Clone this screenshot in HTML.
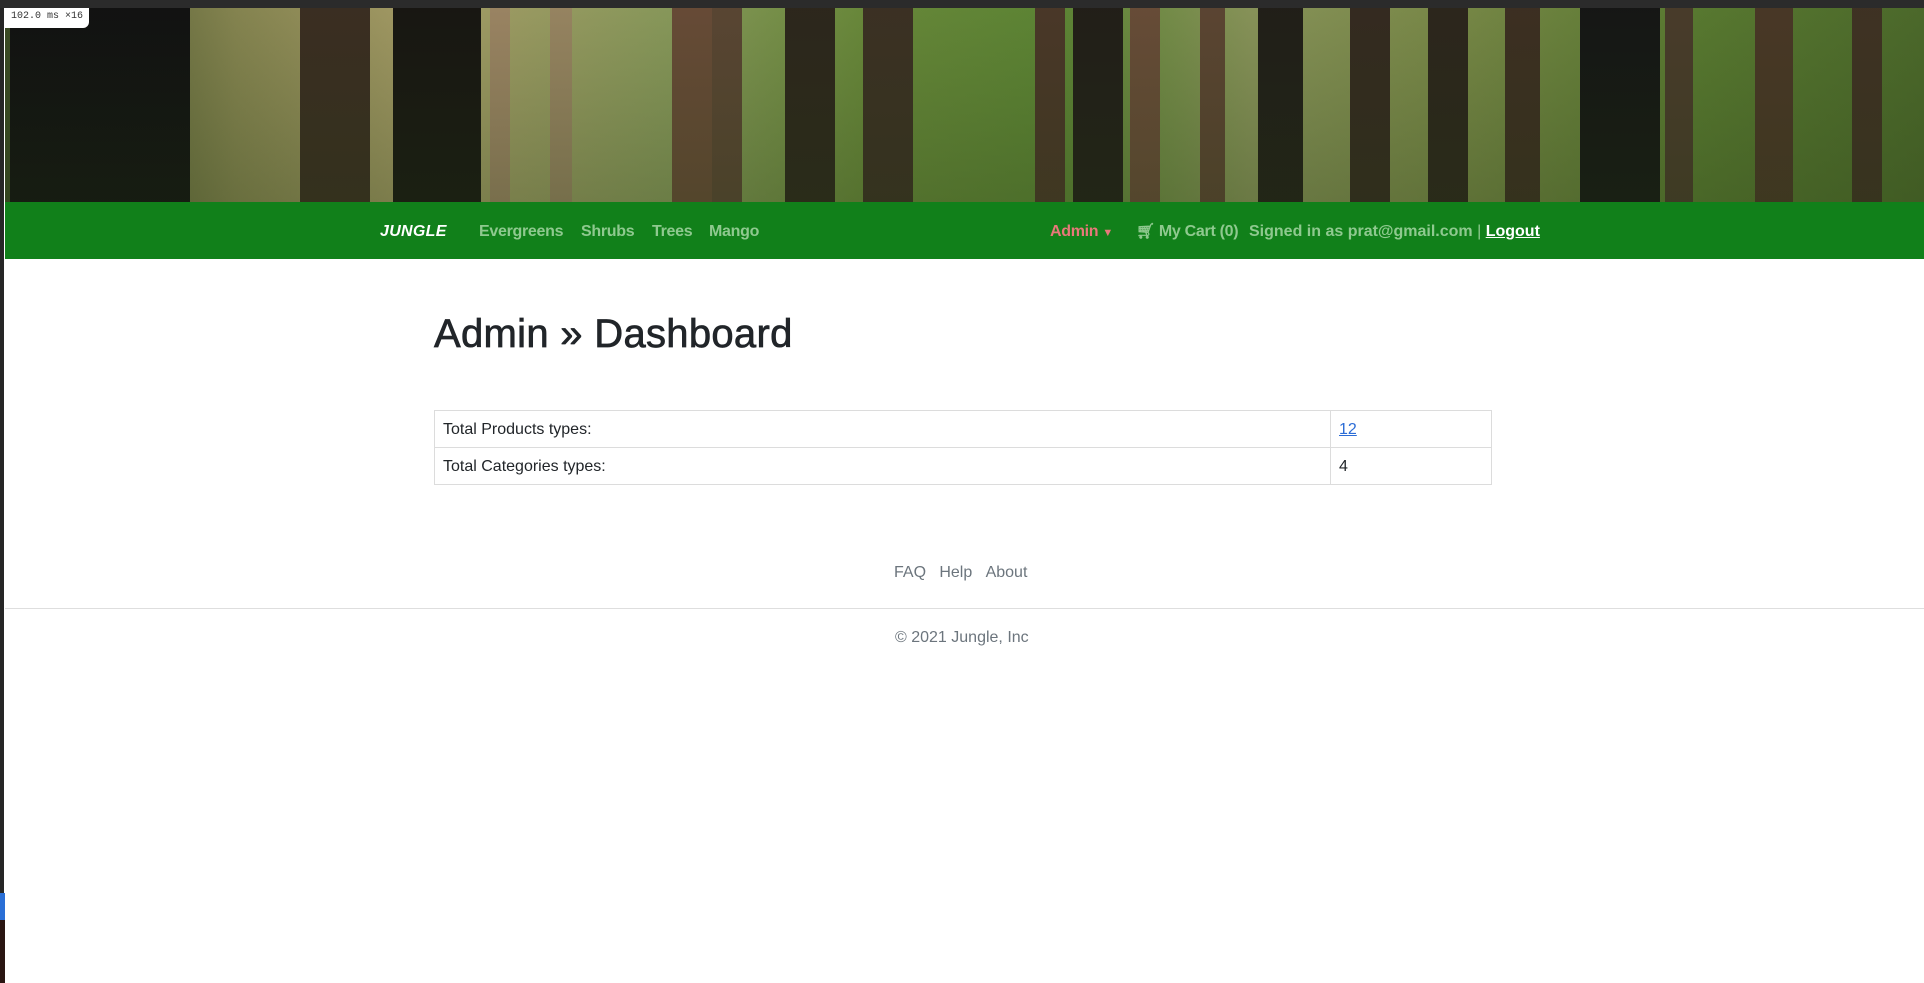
<!DOCTYPE html>
<html><head><meta charset="utf-8"><style>
*{margin:0;padding:0;box-sizing:border-box}
body{width:1924px;height:983px;background:#fff;font-family:"Liberation Sans",sans-serif;position:relative;overflow:hidden}
.topbar{position:absolute;left:0;top:0;width:1924px;height:8px;background:#2b2b2b}
.leftbar{position:absolute;left:0;top:8px;width:4px;height:975px;background:#262626}
.banner{position:absolute;left:5px;top:8px;width:1919px;height:194px;overflow:hidden;
background:linear-gradient(90deg,#3a4a25 0%,#8c8a55 12%,#b0a46e 22%,#8ea060 35%,#6c8e3c 45%,#5f8a36 55%,#8f9a5f 65%,#7f8f4c 75%,#5b7e32 88%,#4d6c2c 100%)}
.banner::after{content:"";position:absolute;inset:0;background:linear-gradient(180deg,rgba(60,70,30,.1),rgba(40,60,20,.35))}
.t{position:absolute;top:0;height:194px}
.nav{position:absolute;left:5px;top:202px;width:1919px;height:57px;background:#11801a}
.nav>span{position:absolute;top:21px;font-size:16px;line-height:18px;font-weight:bold;color:#8fc98f;white-space:nowrap;letter-spacing:-0.3px}
h1{position:absolute;left:434px;top:312px;font-size:40px;font-weight:normal;color:#212529;-webkit-text-stroke:0.7px #212529;letter-spacing:0.3px}
table{position:absolute;left:434px;top:410px;width:1058px;border-collapse:collapse;font-size:16px;color:#212529}
td{border:1px solid #dcdcdc;height:37px;padding:2px 8px 0}
.f{position:absolute;font-size:16px;color:#6c757d}
</style></head><body>
<div class="topbar"></div>
<div class="leftbar"></div>
<div style="position:absolute;left:5px;top:8px;width:84px;height:20px;background:#fff;border-radius:0 0 6px 0;font:10px 'Liberation Mono',monospace;color:#333;padding:3px 6px;z-index:3">102.0 ms ×16</div>
<div class="banner">
<div class="t" style="left:5px;width:180px;background:#0d0c10"></div>
<div class="t" style="left:295px;width:70px;background:#3a2b22"></div>
<div class="t" style="left:388px;width:88px;background:#141111"></div>
<div class="t" style="left:485px;width:20px;background:#a48a6a"></div>
<div class="t" style="left:545px;width:22px;background:#a08a68"></div>
<div class="t" style="left:667px;width:45px;background:#6b4b39"></div>
<div class="t" style="left:707px;width:30px;background:#5c4535"></div>
<div class="t" style="left:780px;width:50px;background:#2b231c"></div>
<div class="t" style="left:858px;width:50px;background:#3b2e24"></div>
<div class="t" style="left:1030px;width:30px;background:#4b3529"></div>
<div class="t" style="left:1068px;width:50px;background:#1f1a18"></div>
<div class="t" style="left:1125px;width:30px;background:#6b4c3a"></div>
<div class="t" style="left:1195px;width:25px;background:#5e4434"></div>
<div class="t" style="left:1253px;width:45px;background:#1e1a18"></div>
<div class="t" style="left:1345px;width:40px;background:#332720"></div>
<div class="t" style="left:1423px;width:40px;background:#2a221c"></div>
<div class="t" style="left:1500px;width:35px;background:#3c2c22"></div>
<div class="t" style="left:1575px;width:80px;background:#111114"></div>
<div class="t" style="left:1660px;width:28px;background:#4a3a2c"></div>
<div class="t" style="left:1750px;width:38px;background:#4a3527"></div>
<div class="t" style="left:1847px;width:30px;background:#3f2f24"></div>
</div>
<div class="nav">
<span style="left:375px;color:#fff;font-style:italic;font-weight:900;letter-spacing:.3px">JUNGLE</span>
<span style="left:474px">Evergreens</span>
<span style="left:576px">Shrubs</span>
<span style="left:647px">Trees</span>
<span style="left:704px">Mango</span>
<span style="left:1045px;color:#e8787a">Admin <span style="font-size:11px">▼</span></span>
<span style="left:1131px"><span style="font-size:15px">🛒︎</span> My Cart (0)</span>
<span style="left:1244px;letter-spacing:0">Signed in as prat@gmail.com <span style="font-weight:normal">|</span> <u style="color:#fff">Logout</u></span>
</div>
<h1>Admin » Dashboard</h1>
<table>
<tr><td>Total Products types:</td><td style="width:161px"><u style="color:#2b6cd6">12</u></td></tr>
<tr><td>Total Categories types:</td><td>4</td></tr>
</table>
<div class="f" style="left:894px;top:564px">FAQ&nbsp;&nbsp;&nbsp;Help&nbsp;&nbsp;&nbsp;About</div>
<div style="position:absolute;left:5px;top:608px;width:1919px;height:1px;background:#dedede"></div>
<div class="f" style="left:895px;top:629px">© 2021 Jungle, Inc</div>
<div style="position:absolute;left:0;top:893px;width:5px;height:27px;background:#2a6fd6"></div>
<div style="position:absolute;left:0;top:920px;width:5px;height:63px;background:#2a1512"></div>
</body></html>
